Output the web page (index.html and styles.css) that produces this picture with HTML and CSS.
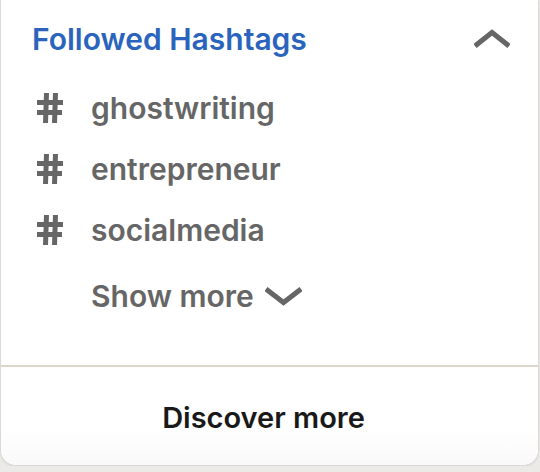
FILE: index.html
```html
<!DOCTYPE html>
<html lang="en">

<head>
    <meta charset="UTF-8">
    <meta name="viewport" content="width=device-width, initial-scale=1.0">
    <title>Followed Hashtags</title>
    <link rel="stylesheet" href="styles.css">
</head>

<body>
    <div class="card">
        <div class="card-header">
            <h2 class="card-title">Followed Hashtags</h2>
            <svg class="chevron-up" width="36" height="20" viewBox="0 0 36 20">
                <polyline points="1,17 18,3.5 35,17" fill="none" stroke="#666" stroke-width="5" />
            </svg>
        </div>
        <ul class="tag-list">
            <li class="tag">
                <svg class="hash" width="26" height="30" viewBox="0 0 26 30">
                    <polygon points="7,0 12,0 11,30 6,30" fill="#666" />
                    <polygon points="16,0 21,0 20,30 15,30" fill="#666" />
                    <rect x="0" y="7" width="26" height="5" fill="#666" />
                    <rect x="0" y="17" width="25" height="5" fill="#666" />
                </svg>
                <span>ghostwriting</span>
            </li>
            <li class="tag">
                <svg class="hash" width="26" height="30" viewBox="0 0 26 30">
                    <polygon points="7,0 12,0 11,30 6,30" fill="#666" />
                    <polygon points="16,0 21,0 20,30 15,30" fill="#666" />
                    <rect x="0" y="7" width="26" height="5" fill="#666" />
                    <rect x="0" y="17" width="25" height="5" fill="#666" />
                </svg>
                <span>entrepreneur</span>
            </li>
            <li class="tag">
                <svg class="hash" width="26" height="30" viewBox="0 0 26 30">
                    <polygon points="7,0 12,0 11,30 6,30" fill="#666" />
                    <polygon points="16,0 21,0 20,30 15,30" fill="#666" />
                    <rect x="0" y="7" width="26" height="5" fill="#666" />
                    <rect x="0" y="17" width="25" height="5" fill="#666" />
                </svg>
                <span>socialmedia</span>
            </li>
            <li class="show-more">
                <span>Show more</span>
                <svg class="chevron-down" width="37" height="20" viewBox="0 0 37 20">
                    <polyline points="1,3 18.5,16.5 36,3" fill="none" stroke="#666" stroke-width="5" />
                </svg>
            </li>
        </ul>
        <div class="card-footer">Discover more</div>
    </div>
</body>

</html>
```

FILE: styles.css
```css
body {
    font-family: Inter, "Liberation Sans", Arial, sans-serif;
    background-color: #ebeae7;
    margin: 0;
}

.card {
    width: 539px;
    height: 466px;
    box-sizing: border-box;
    background: #ffffff;
    border: 1px solid #d9d9d9;
    border-top: none;
    border-radius: 0 0 16px 16px;
    box-shadow: 0 1px 2px rgba(0, 0, 0, 0.08);
    display: flex;
    flex-direction: column;
    overflow: hidden;
}

.card-header {
    display: flex;
    justify-content: space-between;
    align-items: center;
    padding: 21px 28px 0 31px;
}

.card-title {
    margin: 0;
    font-size: 30px;
    line-height: 36px;
    font-weight: 600;
    color: #2b64bd;
}

.chevron-up {
    display: block;
}

.tag-list {
    list-style-type: none;
    margin: 20px 0 0;
    padding: 0 0 0 36px;
    flex: 1;
}

.tag,
.show-more {
    display: flex;
    align-items: center;
    height: 61px;
    font-size: 30px;
    font-weight: 600;
    color: #666666;
}

.hash {
    display: block;
    margin-right: 28px;
}

.show-more {
    margin-top: 5px;
    padding-left: 54px;
}

.chevron-down {
    display: block;
    margin-left: 11px;
}

.card-footer {
    border-top: 2px solid #dcd6cd;
    padding: 33px 12px 29px 0;
    text-align: center;
    font-size: 29px;
    line-height: 36px;
    font-weight: 600;
    color: #191919;
    background: linear-gradient(#ffffff 60%, #f9f9f9);
}
```
